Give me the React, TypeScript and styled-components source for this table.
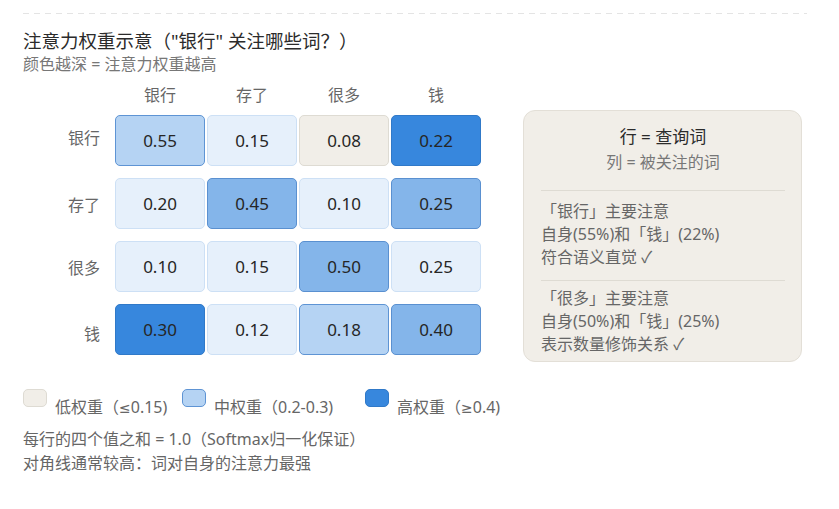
import React from 'react';
import styled, { createGlobalStyle } from 'styled-components';

type Tone = 'low' | 'faint' | 'light' | 'mid' | 'high';

const tones: Record<Tone, { bg: string; border: string }> = {
  low: { bg: '#f1eee8', border: '#dedbd3' },
  faint: { bg: '#e6f0fb', border: '#cde0f5' },
  light: { bg: '#b5d3f3', border: '#5e94d4' },
  mid: { bg: '#84b5ea', border: '#5a90d0' },
  high: { bg: '#3787dd', border: '#3079c8' },
};

const words = ['银行', '存了', '很多', '钱'];

// vertical nudge of each row label, as in the original drawing
const labelShift = [-4, 0, 0, 3];

const matrix: { value: string; tone: Tone }[][] = [
  [
    { value: '0.55', tone: 'light' },
    { value: '0.15', tone: 'faint' },
    { value: '0.08', tone: 'low' },
    { value: '0.22', tone: 'high' },
  ],
  [
    { value: '0.20', tone: 'faint' },
    { value: '0.45', tone: 'mid' },
    { value: '0.10', tone: 'faint' },
    { value: '0.25', tone: 'mid' },
  ],
  [
    { value: '0.10', tone: 'faint' },
    { value: '0.15', tone: 'faint' },
    { value: '0.50', tone: 'mid' },
    { value: '0.25', tone: 'faint' },
  ],
  [
    { value: '0.30', tone: 'high' },
    { value: '0.12', tone: 'faint' },
    { value: '0.18', tone: 'light' },
    { value: '0.40', tone: 'mid' },
  ],
];

const GlobalStyle = createGlobalStyle`
  body {
    margin: 0;
    background: #ffffff;
    font-family: "Noto Sans", "Noto Sans CJK SC", sans-serif;
  }
`;

const Page = styled.div`
  width: 839px;
  height: 509px;
  box-sizing: border-box;
  padding: 13px 32px 0 23px;
`;

const DashedRule = styled.div`
  height: 1px;
  background: repeating-linear-gradient(90deg, #e4e4e4 0 6px, transparent 6px 11px);
`;

const Title = styled.div`
  margin-top: 15px;
  font-size: 18.5px;
  line-height: 24px;
  color: #2b2b2b;
`;

const Subtitle = styled.div`
  margin-top: 1px;
  font-size: 16px;
  line-height: 20px;
  color: #777;
`;

const Main = styled.div`
  display: flex;
  align-items: flex-start;
  gap: 42px;
  margin-top: 13px;
`;

const Matrix = styled.div`
  display: grid;
  grid-template-columns: repeat(5, 90px);
  grid-template-rows: 16px repeat(4, 51px);
  column-gap: 2px;
  row-gap: 12px;
`;

const ColHead = styled.div`
  font-size: 16px;
  line-height: 16px;
  color: #666;
  text-align: center;
`;

const RowHead = styled.div<{ $shift: number }>`
  display: flex;
  align-items: center;
  justify-content: flex-end;
  padding-right: 13px;
  transform: translateY(${p => p.$shift}px);
  font-size: 16px;
  color: #666;
`;

const Cell = styled.div<{ $tone: Tone }>`
  display: flex;
  align-items: center;
  justify-content: center;
  box-sizing: border-box;
  border-radius: 5px;
  border: 1px solid ${p => tones[p.$tone].border};
  background: ${p => tones[p.$tone].bg};
  font-size: 17px;
  color: #262626;
`;

const Panel = styled.div`
  margin-top: 23px;
  width: 279px;
  height: 252px;
  box-sizing: border-box;
  padding: 14px 16px 0 17px;
  border-radius: 12px;
  border: 1px solid #e3dfd7;
  background: #f1eee8;
`;

const PanelTitle = styled.div`
  font-size: 17px;
  line-height: 24px;
  color: #2b2b2b;
  text-align: center;
`;

const PanelSub = styled.div`
  margin-top: 3px;
  font-size: 16px;
  line-height: 20px;
  color: #777;
  text-align: center;
`;

const PanelRule = styled.div<{ $top: number; $bottom: number }>`
  height: 1px;
  background: #dedbd3;
  margin: ${p => p.$top}px 0 ${p => p.$bottom}px;
`;

const PanelLine = styled.div`
  font-size: 16px;
  line-height: 23px;
  color: #666;
`;

const Legend = styled.div`
  display: flex;
  margin-top: 27px;
`;

const LegendItem = styled.div<{ $width?: number }>`
  display: flex;
  align-items: flex-start;
  width: ${p => (p.$width ? `${p.$width}px` : 'auto')};
`;

const Swatch = styled.div<{ $tone: Tone }>`
  width: 24px;
  height: 18px;
  box-sizing: border-box;
  border-radius: 5px;
  border: 1px solid ${p => tones[p.$tone].border};
  background: ${p => tones[p.$tone].bg};
`;

const LegendLabel = styled.span`
  margin: 8px 0 0 8px;
  font-size: 16px;
  line-height: 20px;
  color: #666;
`;

const MathSign = styled.span`
  font-family: "DejaVu Sans", sans-serif;
  font-size: 14px;
`;

const Notes = styled.div`
  margin-top: 9px;
  font-size: 16px;
  line-height: 24px;
  color: #666;
`;

const App: React.FC = () => {
  return (
    <Page>
      <GlobalStyle />
      <DashedRule />
      <Title>注意力权重示意（"银行" 关注哪些词？）</Title>
      <Subtitle>颜色越深 = 注意力权重越高</Subtitle>

      <Main>
        <Matrix>
          <div />
          {words.map(w => (
            <ColHead key={w}>{w}</ColHead>
          ))}
          {matrix.map((row, i) => (
            <React.Fragment key={words[i]}>
              <RowHead $shift={labelShift[i]}>{words[i]}</RowHead>
              {row.map((c, j) => (
                <Cell key={j} $tone={c.tone}>{c.value}</Cell>
              ))}
            </React.Fragment>
          ))}
        </Matrix>

        <Panel>
          <PanelTitle>行 = 查询词</PanelTitle>
          <PanelSub>列 = 被关注的词</PanelSub>
          <PanelRule $top={18} $bottom={9} />
          <PanelLine>「银行」主要注意</PanelLine>
          <PanelLine>自身(55%)和「钱」(22%)</PanelLine>
          <PanelLine>符合语义直觉 ✓</PanelLine>
          <PanelRule $top={11} $bottom={6} />
          <PanelLine>「很多」主要注意</PanelLine>
          <PanelLine>自身(50%)和「钱」(25%)</PanelLine>
          <PanelLine>表示数量修饰关系 ✓</PanelLine>
        </Panel>
      </Main>

      <Legend>
        <LegendItem $width={159}>
          <Swatch $tone="low" />
          <LegendLabel>低权重（<MathSign>≤</MathSign>0.15)</LegendLabel>
        </LegendItem>
        <LegendItem $width={183}>
          <Swatch $tone="light" />
          <LegendLabel>中权重（0.2-0.3)</LegendLabel>
        </LegendItem>
        <LegendItem>
          <Swatch $tone="high" />
          <LegendLabel>高权重（<MathSign>≥</MathSign>0.4)</LegendLabel>
        </LegendItem>
      </Legend>

      <Notes>
        <div>每行的四个值之和 = 1.0（Softmax归一化保证）</div>
        <div>对角线通常较高：词对自身的注意力最强</div>
      </Notes>
    </Page>
  );
};

export default App;
